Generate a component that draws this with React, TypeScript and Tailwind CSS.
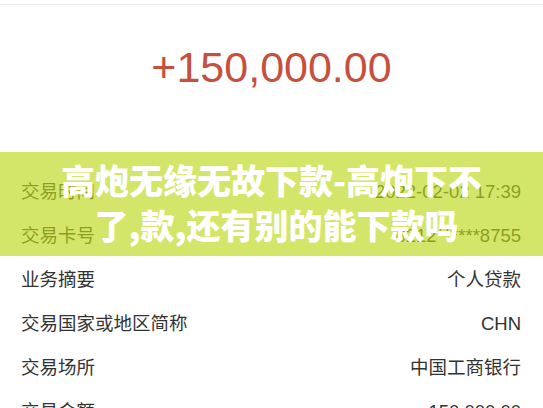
import React from "react";

const rows: [string, string][] = [
  ["交易时间", "2022-02-02 17:39"],
  ["交易卡号", "6212******8755"],
  ["业务摘要", "个人贷款"],
  ["交易国家或地区简称", "CHN"],
  ["交易场所", "中国工商银行"],
  ["交易金额", "150,000.00"],
];

export default function App() {
  return (
    <div className="relative w-[543px] h-[408px] overflow-hidden bg-white font-['Liberation_Sans','Noto_Sans_CJK_SC',sans-serif]">
      <div className="mt-[4px] border-t border-[#ebebeb]" />
      <div className="pt-[38px] text-center text-[43px] leading-[48px] text-[#c5503f]">
        +150,000.00
      </div>
      <div className="mt-[79px] flex flex-col">
        {rows.map(([k, v]) => (
          <div
            key={k}
            className="flex h-[44px] items-center justify-between pl-[21px] pr-[22px] text-[18.5px] text-[#333333]"
          >
            <span>{k}</span>
            <span>{v}</span>
          </div>
        ))}
      </div>
      <div className="absolute left-0 right-0 top-[152px] h-[104px] bg-[rgba(189,217,26,0.65)] flex flex-col items-center justify-center text-white text-[34px] leading-[45px] font-black font-['Noto_Sans_CJK_SC',sans-serif] pb-[4px]">
        <div>高炮无缘无故下款-高炮下不</div>
        <div className="pl-[10px]">了,款,还有别的能下款吗</div>
      </div>
    </div>
  );
}
